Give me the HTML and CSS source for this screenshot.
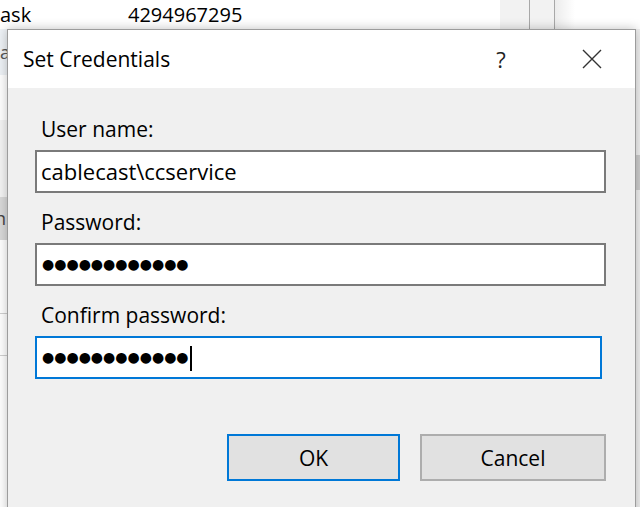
FILE: index.html
```html
<!DOCTYPE html>
<html lang="en">
<head>
    <meta charset="UTF-8">
    <title>Set Credentials</title>
    <link rel="stylesheet" href="styles.css">
</head>
<body>
    <!-- window behind the dialog -->
    <div class="app">
        <div class="app-head">
            <div class="cell cell-name">ask</div>
            <div class="cell cell-value">4294967295</div>
            <div class="cell cell-col cell-wide"></div>
            <div class="cell cell-col"></div>
            <div class="cell cell-rest"></div>
        </div>
        <div class="app-body">
            <div class="app-rows">
                <div class="row row-a">a</div>
                <div class="row row-plain"></div>
                <div class="row row-light"></div>
                <div class="row row-sel">n</div>
                <div class="row row-plain row-tall"></div>
                <div class="row row-lined"></div>
            </div>
            <div class="app-scroll">
                <div class="thumb"></div>
            </div>
        </div>
    </div>

    <!-- Set Credentials dialog -->
    <div class="dialog">
        <div class="dialog-title">
            <span class="title-text">Set Credentials</span>
            <span class="title-help">?</span>
            <span class="title-close">
                <svg width="20" height="20" viewBox="0 0 20 20">
                    <path d="M1 1 L19 19 M19 1 L1 19" stroke="#333" stroke-width="1.4" fill="none"/>
                </svg>
            </span>
        </div>
        <div class="dialog-body">
            <div class="field">
                <div class="field-label">User name:</div>
                <div class="field-box">cablecast\ccservice</div>
            </div>
            <div class="field">
                <div class="field-label">Password:</div>
                <div class="field-box dots">●●●●●●●●●●●●</div>
            </div>
            <div class="field">
                <div class="field-label">Confirm password:</div>
                <div class="field-box dots focused">●●●●●●●●●●●●<span class="caret"></span></div>
            </div>
            <div class="buttons">
                <button class="btn btn-default">OK</button>
                <button class="btn btn-cancel">Cancel</button>
            </div>
        </div>
    </div>
</body>
</html>
```

FILE: styles.css
```css
body {
    margin: 0;
    height: 507px;
    overflow: hidden;
    background: #fff;
    font-family: "Open Sans", "Noto Sans", sans-serif;
    font-size: 21px;
    color: #000;
}

/* background window */
.app {
    display: flex;
    flex-direction: column;
    height: 100%;
}

.app-head {
    display: flex;
    height: 29px;
    line-height: 29px;
    font-size: 20px;
    background: #fff;
}

.cell-name {
    width: 128px;
}

.cell-value {
    width: 372px;
}

.cell-col {
    width: 24px;
    background: #f2f2f2;
    border-right: 1px solid #a8a8a8;
}

.cell-wide {
    width: 29px;
}

.cell-rest {
    flex: 1;
    background: linear-gradient(90deg, #ececec, #fff 20px);
}

.app-body {
    flex: 1;
    display: flex;
}

.app-rows {
    flex: 1;
}

.row {
    height: 23px;
    line-height: 23px;
    font-size: 18px;
    overflow: hidden;
}

.row-a {
    height: 46px;
    line-height: 46px;
    background: #eef2f6;
    color: #555;
}

.row-plain {
    height: 45px;
}

.row-light {
    height: 77px;
    background: #f4f4f4;
}

.row-sel {
    height: 43px;
    line-height: 43px;
    background: #d9d9d9;
    color: #444;
    text-indent: -5px;
}

.row-tall {
    height: 73px;
}

.row-lined {
    height: 41px;
    border-top: 1px solid #d0d0d0;
    border-bottom: 1px solid #d0d0d0;
}

.app-scroll {
    width: 20px;
    background: #f0f0f0;
}

.thumb {
    margin-top: 126px;
    height: 35px;
    background: #cdcdcd;
}

/* dialog */
.dialog {
    position: absolute;
    left: 7px;
    top: 29px;
    width: 627px;
    height: 500px;
    border: 1px solid #9c9c9c;
    background: #f0f0f0;
    box-shadow: 0 0 10px rgba(0, 0, 0, 0.25);
}

.dialog-title {
    display: flex;
    align-items: center;
    height: 58px;
    background: #fff;
    padding-left: 15px;
}

.title-text {
    flex: 1;
}

.title-help {
    width: 20px;
    font-size: 22px;
    text-align: center;
    color: #222;
}

.title-close {
    display: flex;
    margin: 0 33px 0 71px;
}

.dialog-body {
    padding: 27px 29px 0 27px;
}

.field {
    margin-bottom: 15px;
}

.field-label {
    line-height: 28px;
    padding-left: 6px;
    margin-bottom: 7px;
}

.field-box {
    height: 39px;
    line-height: 39px;
    padding-left: 4px;
    border: 2px solid #7a7a7a;
    background: #fff;
    font-size: 22px;
    white-space: nowrap;
}

.dots {
    font-family: "DejaVu Sans", sans-serif;
    font-size: 14px;
    padding-left: 5px;
}

.focused {
    border-color: #0078d7;
    margin-right: 4px;
}

.caret {
    display: inline-block;
    width: 2px;
    height: 25px;
    background: #000;
    vertical-align: middle;
    margin-left: 1px;
}

.buttons {
    display: flex;
    justify-content: flex-end;
    gap: 20px;
    margin-top: 55px;
}

.btn {
    height: 47px;
    font-family: inherit;
    font-size: 21px;
    color: #000;
    background: #e1e1e1;
    border: 2px solid #adadad;
    padding: 0;
}

.btn-default {
    width: 173px;
    border-color: #0078d7;
}

.btn-cancel {
    width: 186px;
}
```
